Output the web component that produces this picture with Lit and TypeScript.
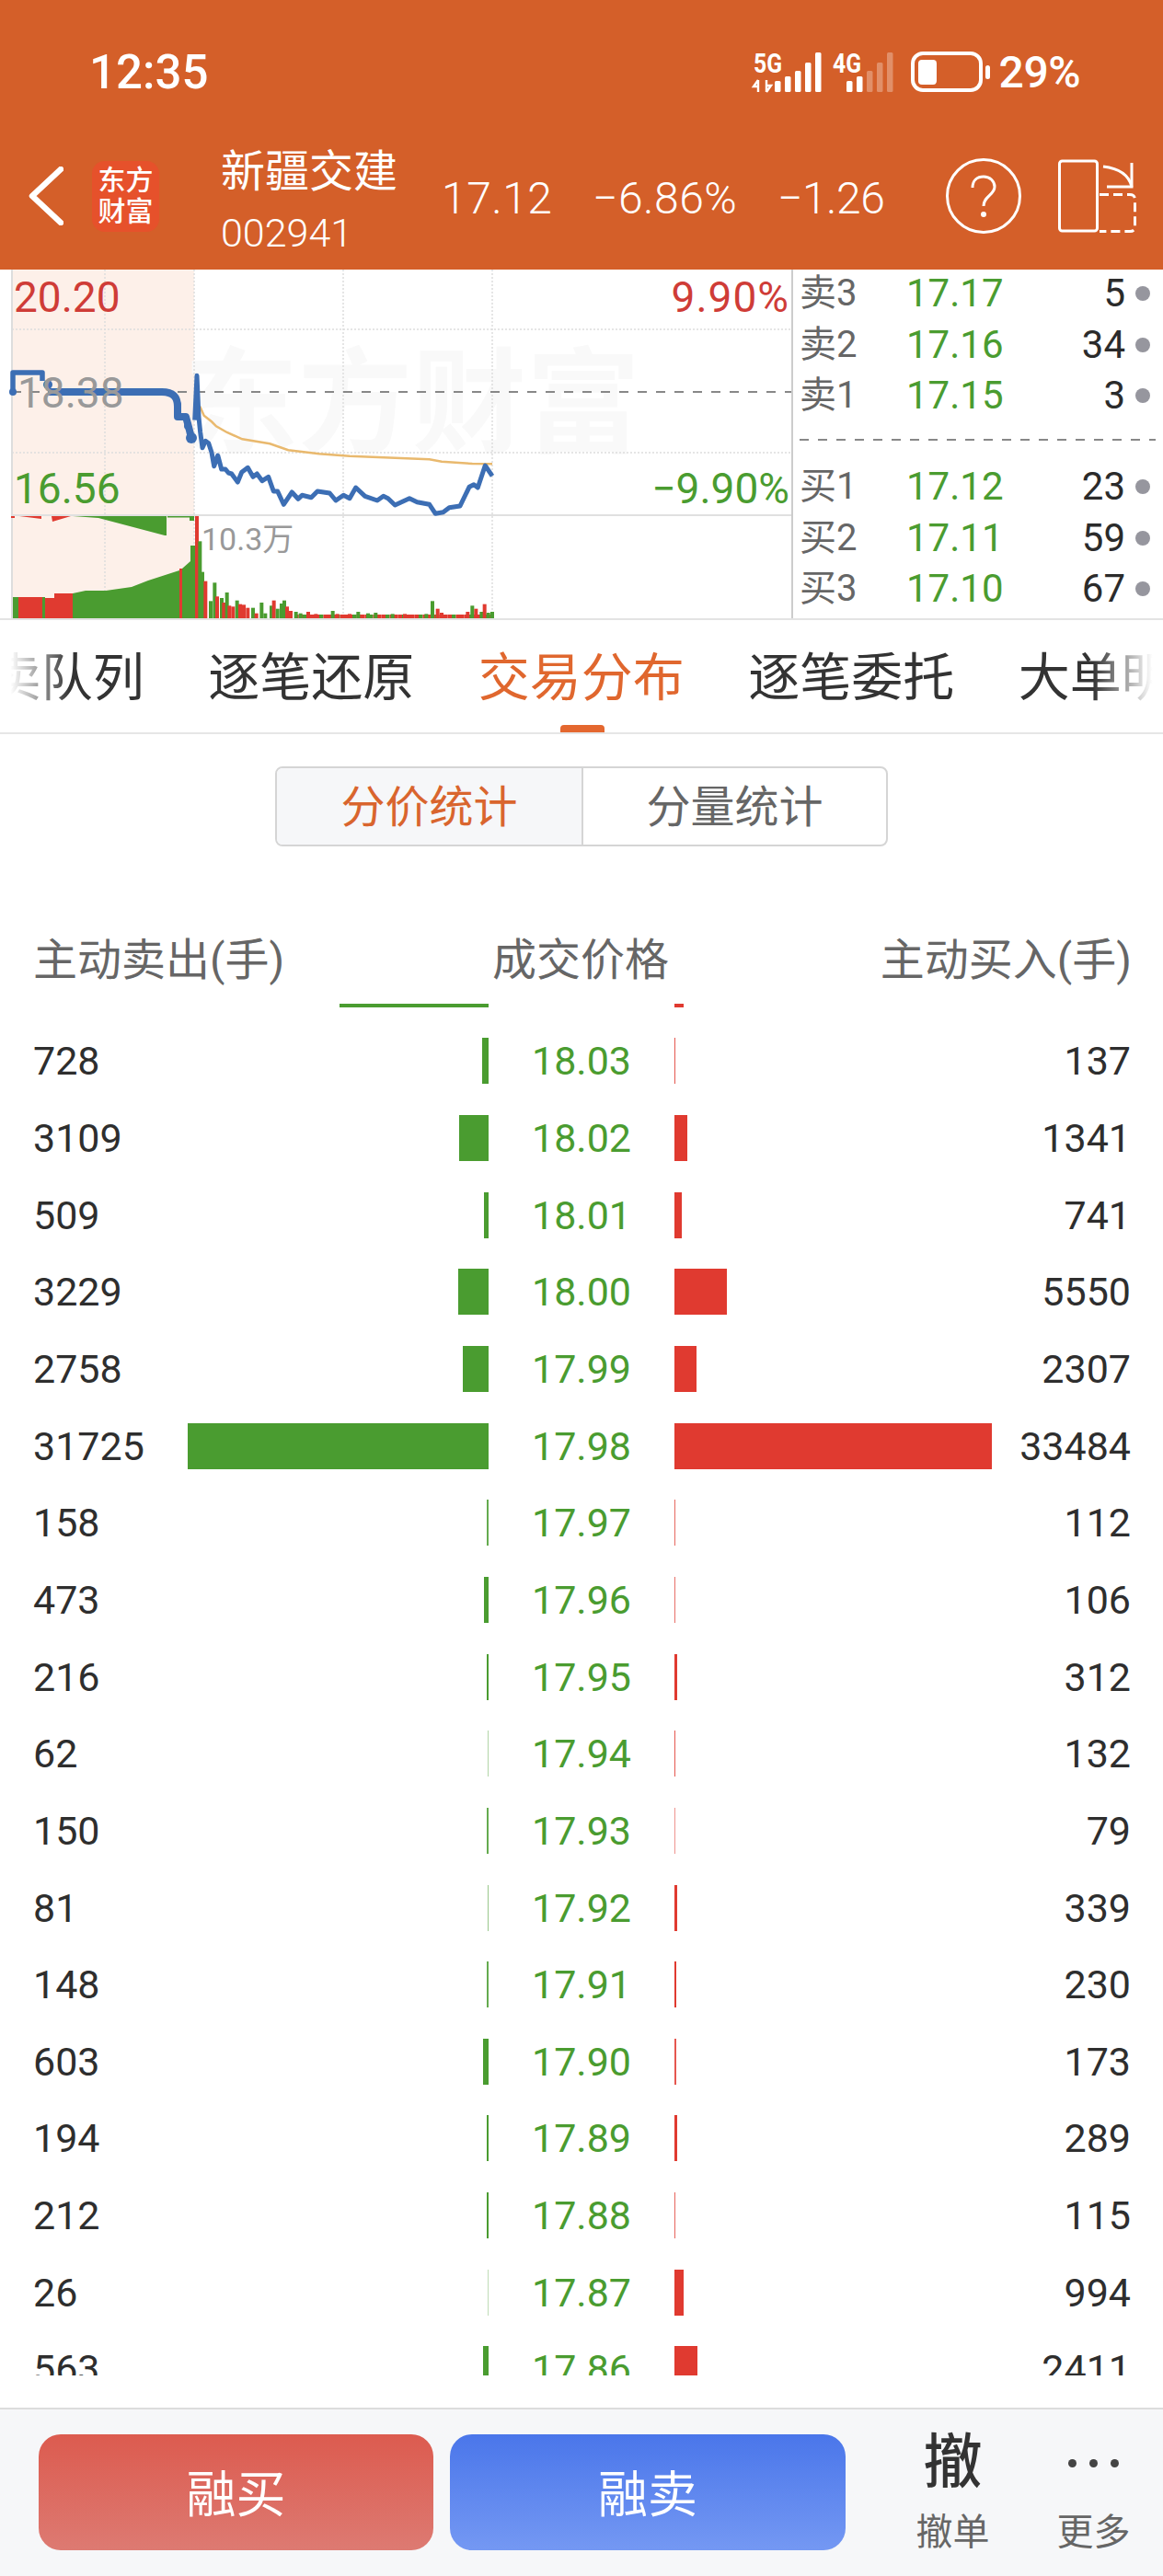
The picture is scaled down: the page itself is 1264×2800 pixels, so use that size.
import { LitElement, html, css, svg, unsafeCSS } from 'lit';
import { customElement } from 'lit/decorators.js';

// [卖出, 价格, 买入]
const TRADES: [number, string, number][] = [
  [728, '18.03', 137],
  [3109, '18.02', 1341],
  [509, '18.01', 741],
  [3229, '18.00', 5550],
  [2758, '17.99', 2307],
  [31725, '17.98', 33484],
  [158, '17.97', 112],
  [473, '17.96', 106],
  [216, '17.95', 312],
  [62, '17.94', 132],
  [150, '17.93', 79],
  [81, '17.92', 339],
  [148, '17.91', 230],
  [603, '17.90', 173],
  [194, '17.89', 289],
  [212, '17.88', 115],
  [26, '17.87', 994],
  [563, '17.86', 2411],
];

const ASKS = [
  ['卖3', '17.17', '5'],
  ['卖2', '17.16', '34'],
  ['卖1', '17.15', '3'],
];
const BIDS = [
  ['买1', '17.12', '23'],
  ['买2', '17.11', '59'],
  ['买3', '17.10', '67'],
];

const BAR_SCALE = 0.0103;

// intraday curves, in thirds of a pixel from the chart's (180, 380) corner
const PRICE = [
  [95, 230], [102, 85], [108, 220], [113, 270], [120, 320], [130, 298], [140, 305], [150, 335],
  [158, 380], [170, 345], [182, 390], [195, 390], [205, 402], [215, 405], [235, 432], [248, 400],
  [268, 385], [285, 415], [298, 405], [315, 428], [335, 415], [352, 462], [365, 462], [385, 505],
  [412, 465], [432, 487], [445, 475], [475, 482], [495, 462], [535, 468], [555, 492], [580, 475],
  [600, 485], [620, 450], [650, 478], [690, 492], [710, 478], [725, 485], [748, 507], [795, 485],
  [820, 497], [860, 505], [880, 535], [905, 530], [925, 515], [960, 510], [990, 448], [1005, 440],
  [1018, 450], [1042, 378], [1065, 412],
];
const AVERAGE = [
  [112, 185], [125, 215], [150, 235], [165, 250], [200, 270], [250, 292], [340, 307], [400, 328],
  [500, 340], [600, 347], [860, 358], [900, 365], [1000, 372], [1065, 373],
];
const VOLUME: [number, number, 'r' | 'g'][] = [
  [112, 625, 'g'], [120, 725, 'g'], [130, 755, 'r'], [147, 820, 'g'], [160, 760, 'g'], [168, 805, 'r'],
  [183, 810, 'g'], [190, 825, 'r'], [200, 792, 'g'], [208, 835, 'r'], [220, 838, 'r'], [233, 818, 'g'],
  [243, 830, 'r'], [255, 832, 'r'], [268, 842, 'r'], [285, 842, 'g'], [296, 860, 'r'], [313, 825, 'g'],
  [325, 860, 'g'], [345, 835, 'g'], [353, 818, 'r'], [365, 845, 'g'], [378, 828, 'g'], [387, 818, 'g'],
  [396, 838, 'r'], [408, 852, 'r'], [425, 855, 'g'], [440, 860, 'g'], [465, 855, 'r'], [490, 862, 'r'],
  [545, 852, 'g'], [560, 862, 'r'], [600, 862, 'r'], [628, 855, 'g'], [660, 860, 'g'], [685, 858, 'g'],
  [740, 862, 'g'], [780, 862, 'r'], [850, 862, 'g'], [870, 820, 'g'], [887, 845, 'r'], [900, 858, 'r'],
  [960, 865, 'r'], [985, 855, 'r'], [1000, 835, 'g'], [1012, 845, 'r'], [1030, 855, 'g'], [1040, 830, 'r'],
  [1052, 858, 'g'], [1065, 855, 'g'],
];

const RED = '#e03a30';
const GREEN = '#4a9c30';

const toPath = (pts: number[][]) =>
  pts.map(([x, y]) => `${(180 + x / 3).toFixed(1)},${(380 + y / 3).toFixed(1)}`).join(' ');

function signal(label: string, x0: number, lit: number, arrows: boolean) {
  const heights = [12, 17, 23, 32, 43];
  return html`<svg class="signal" width="72" height="46" viewBox="0 0 72 46">
    <text x="0" y="23" class="net" textLength="31" lengthAdjust="spacingAndGlyphs">${label}</text>
    ${arrows
      ? svg`<path d="M5 31v13M5 31l-5 7h5M14 44v-13M14 44l5-7h-5" fill="none" stroke="#fff" stroke-width="2.4"/>`
      : ''}
    ${heights.map(
      (h, i) => svg`<rect x="${x0 + i * 11}" y="${44 - h}" width="6.5" height="${h}" rx="1.5"
        fill="#fff" opacity="${i < lit ? 1 : 0.3}"/>`,
    )}
  </svg>`;
}

@customElement('app-root')
export class AppRoot extends LitElement {
  static styles = css`
    :host {
      display: block;
      width: 1264px;
      height: 2800px;
      background: #fff;
      overflow: hidden;
      font-family: Roboto, 'Noto Sans CJK SC', sans-serif;
    }
    .header {
      height: 293px;
      background: #d45f29;
      color: #fff;
    }
    .status {
      height: 156px;
      display: flex;
      align-items: flex-start;
      padding: 56px 90px 0 97px;
      box-sizing: border-box;
    }
    .time {
      font-size: 51px;
      font-weight: 500;
      line-height: 46px;
      margin-right: auto;
    }
    .signal {
      display: block;
      overflow: visible;
    }
    .signal + .signal {
      margin-left: 14px;
    }
    .net {
      font-size: 30px;
      font-weight: 700;
      fill: #fff;
    }
    .battery {
      display: block;
      margin: 0 9px 0 13px;
    }
    .pct {
      font-size: 48px;
      font-weight: 500;
      line-height: 46px;
      letter-spacing: -0.5px;
    }
    .nav {
      height: 114px;
      display: flex;
      align-items: center;
      padding-left: 31px;
    }
    .logo {
      width: 73px;
      height: 77px;
      margin: 0 67px 0 31px;
      border-radius: 14px;
      background: #e6512b;
      font-size: 30px;
      font-weight: 500;
      line-height: 34px;
      text-align: center;
      display: flex;
      flex-direction: column;
      justify-content: center;
    }
    .title {
      width: 240px;
      padding-top: 10px;
    }
    .name {
      font-size: 48px;
      line-height: 58px;
    }
    .code {
      font-size: 43px;
      font-weight: 300;
      line-height: 50px;
      margin-top: 12px;
    }
    .quote {
      display: grid;
      grid-template-columns: 164px 201px 183px;
      font-size: 48px;
      font-weight: 300;
      letter-spacing: 0.5px;
      padding-top: 4px;
    }
    .quote span:last-child {
      letter-spacing: -0.5px;
    }
    .help {
      width: 122px;
      display: block;
    }
    .market {
      height: 381px;
      display: flex;
      box-sizing: border-box;
      border-bottom: 2px solid #e3e3e3;
    }
    .chart {
      width: 860px;
      display: block;
      flex: none;
    }
    .chart text {
      font-family: Roboto, 'Noto Sans CJK SC', sans-serif;
      font-size: 46px;
    }
    .chart .pct-up {
      letter-spacing: 1px;
    }
    .chart .mark {
      font-size: 124px;
      font-weight: 700;
      fill: #f9f9f9;
      font-family: 'Noto Sans CJK SC', sans-serif;
    }
    .chart .peak {
      font-size: 34px;
      fill: #999;
    }
    .book {
      flex: 1;
      border-left: 2px solid #ccc;
      padding-left: 7px;
    }
    .quotes {
      display: flex;
      flex-direction: column;
      gap: 7.7px;
      padding-top: 1px;
    }
    .level {
      height: 48px;
      display: grid;
      grid-template-columns: 116px 104px 134px 34px;
      align-items: center;
      font-size: 42px;
      line-height: 50px;
    }
    .level .lbl {
      color: #666;
      font-size: 40px;
    }
    .level .px {
      color: ${unsafeCSS(GREEN)};
      white-space: nowrap;
    }
    .level .qty {
      color: #2b2b2b;
      text-align: right;
    }
    .level i {
      justify-self: end;
      width: 16px;
      height: 16px;
      margin-right: 7px;
      border-radius: 50%;
      background: #96969e;
    }
    .dash {
      height: 2px;
      margin: 23.6px 8px 24px 0;
      background: repeating-linear-gradient(90deg, #888 0 10px, transparent 10px 20px);
    }
    .tabs {
      position: relative;
      height: 124px;
      box-sizing: border-box;
      border-bottom: 2px solid #e6e6e6;
      overflow: hidden;
    }
    .tab-row {
      display: grid;
      grid-template-columns: repeat(5, 293.5px);
      margin-left: -102px;
      text-align: center;
      font-size: 56px;
      line-height: 80px;
      padding-top: 23px;
      color: #333;
      white-space: nowrap;
    }
    .tab-row .on {
      color: #e0672e;
    }
    .tab-mark {
      position: absolute;
      left: 609px;
      bottom: 0;
      width: 48px;
      height: 8px;
      border-radius: 4px 4px 0 0;
      background: #e4672f;
    }
    .fade {
      position: absolute;
      top: 0;
      bottom: 2px;
      width: 76px;
    }
    .fade.l {
      left: 0;
      background: linear-gradient(90deg, #fff 15%, rgba(255, 255, 255, 0));
    }
    .fade.r {
      right: 0;
      background: linear-gradient(270deg, #fff 15%, rgba(255, 255, 255, 0));
    }
    .segments {
      width: 666px;
      height: 87px;
      margin: 35px 0 0 299px;
      box-sizing: border-box;
      display: flex;
      border: 2px solid #d5d5d5;
      border-radius: 8px;
      font-size: 48px;
      line-height: 86px;
      text-align: center;
      color: #666;
    }
    .segments div {
      flex: 1;
    }
    .segments .on {
      flex: none;
      width: 331px;
      background: #f6f7f9;
      color: #d9652e;
      border-right: 2px solid #d5d5d5;
      border-radius: 6px 0 0 6px;
    }
    .heads {
      margin-top: 93px;
      height: 60px;
      padding: 0 34px 0 36px;
      display: flex;
      justify-content: space-between;
      font-size: 48px;
      line-height: 62px;
      color: #666;
    }
    .heads span:nth-child(2) {
      position: relative;
      left: -2px;
    }
    .trades {
      margin-top: 18px;
      height: 1491px;
      overflow: hidden;
    }
    .rows {
      margin-top: -63px;
    }
    .row {
      height: 83.65px;
      display: flex;
      align-items: center;
      font-size: 43px;
    }
    .sell,
    .buy {
      display: flex;
      align-items: center;
      justify-content: space-between;
      color: #2e2e2e;
    }
    .sell {
      width: 531px;
      padding-left: 36px;
      box-sizing: border-box;
    }
    .buy {
      width: 531px;
      padding-right: 35px;
      box-sizing: border-box;
    }
    .price {
      width: 202px;
      text-align: center;
      color: ${unsafeCSS(GREEN)};
    }
    .bar {
      height: 50px;
    }
    .bar.down {
      background: ${unsafeCSS(GREEN)};
    }
    .bar.up {
      background: ${unsafeCSS(RED)};
    }
    .footer {
      margin-top: 35px;
      height: 183px;
      box-sizing: border-box;
      border-top: 2px solid #dcdcdc;
      background: #f6f7f9;
      padding: 27px 0 0 42px;
      display: flex;
      align-items: flex-start;
    }
    .btn {
      width: 429px;
      height: 126px;
      border-radius: 24px;
      color: #fff;
      font-size: 54px;
      line-height: 134px;
      text-align: center;
    }
    .btn.buying {
      background: linear-gradient(#dc5b4f, #dd7a72);
    }
    .btn.selling {
      width: 430px;
      margin-left: 18px;
      background: linear-gradient(#4a76ea, #7498f3);
    }
    .tool {
      width: 81px;
      text-align: center;
      color: #666;
      font-size: 40px;
      line-height: 46px;
    }
    .tool.undo {
      margin-left: 76px;
    }
    .tool.more {
      margin-left: 72px;
    }
    .tool .top {
      display: flex;
      height: 62px;
      align-items: center;
      justify-content: center;
      color: #333;
      font-size: 64px;
      font-weight: 500;
      margin-bottom: 22px;
    }
    .dots {
      display: flex;
      gap: 14px;
    }
    .dots b {
      width: 9px;
      height: 9px;
      border-radius: 50%;
      background: #444;
    }
  `;

  // hairline bars can't go under a pixel, so they thin out through opacity instead
  private bar(value: number, side: 'down' | 'up') {
    const w = value * BAR_SCALE;
    const opacity = w < 1.8 ? Math.min(0.85, Math.max(0.35, w / 1.5)) : 1;
    return html`<div class="bar ${side}" style="width:${Math.max(1, Math.round(w))}px;opacity:${opacity}"></div>`;
  }

  private renderChart() {
    return html`<svg class="chart" width="860" height="379" viewBox="0 293 860 379">
      <rect x="13" y="293" width="198" height="379" fill="#fdf0e9" />
      <text class="mark" x="200" y="482">东方财富</text>
      <g stroke="#ddd" stroke-width="1.5" stroke-dasharray="2 2" fill="none">
        <path d="M114 293V672M211 293V672M373 293V672M535 293V672" />
        <path d="M13 358H860M13 492H860" />
      </g>
      <path d="M13 293V672" stroke="#ddd" stroke-width="2" />
      <path d="M13 426H860" stroke="#888" stroke-width="2" stroke-dasharray="10 10" />
      <path d="M13 560H860" stroke="#e0e0e0" stroke-width="2" />

      <polyline points="${toPath(AVERAGE)}" fill="none" stroke="#e9b96e" stroke-width="2.5" />
      <g fill="none" stroke="#3c6eb4" stroke-linejoin="round">
        <path d="M14 426V405H46V414" stroke-width="5.5" />
        <path d="M52 426H176C190 426 193 434 193 442V453H202L205 464L208 476" stroke-width="8" />
        <polyline points="${toPath(PRICE)}" stroke-width="5" />
      </g>
      <g fill="#3c6eb4">
        <circle cx="14" cy="426" r="4" />
        <circle cx="52" cy="418" r="5" />
        <circle cx="193" cy="440" r="4" />
        <circle cx="195" cy="453" r="4" />
        <circle cx="204" cy="463" r="4" />
        <circle cx="208" cy="476" r="6" />
      </g>

      <g fill="${RED}">
        <rect x="12" y="561" width="4" height="2" />
        <path d="M21 561L45 564V561ZM56 561L57 567L77 561Z" />
        <path d="M20 649H46V672H20ZM49 650H59V672H49ZM59 645H79V672H59Z" />
        <rect x="195" y="618" width="3" height="54" />
        <rect x="212" y="561" width="4" height="111" />
      </g>
      <g fill="${GREEN}">
        <path d="M79 561L107 563L179 582L181 582V561ZM206 561H211V566H206Z" />
        <rect x="182" y="561" width="24" height="1.5" />
        <path d="M14 649H20V672H14ZM46 649H49V672H46Z" />
        <path d="M79 645L93 642L115 642L143 638L161 631L195 620V672H79Z" />
        <path d="M198 618L207 610L207 593L212 593V672H198Z" />
      </g>
      ${Array.from({ length: 48 }, (_, i) => {
        const x = 320 + i * 4.5;
        return svg`<rect x="${x}" y="668" width="4.5" height="4" fill="${i % 4 === 2 ? GREEN : RED}" />`;
      })}
      ${VOLUME.map(
        ([x, top, c]) => svg`<rect x="${180 + x / 3 - 2}" y="${380 + top / 3}" width="4"
          height="${672 - (380 + top / 3)}" fill="${c === 'r' ? RED : GREEN}" />`,
      )}

      <text x="15" y="339" fill="#cf3c37">20.20</text>
      <text x="19" y="443" fill="#999">18.38</text>
      <text x="15" y="547" fill="${GREEN}">16.56</text>
      <text class="pct-up" x="858" y="339" fill="#cf3c37" text-anchor="end">9.90%</text>
      <text x="858" y="547" fill="${GREEN}" text-anchor="end">−9.90%</text>
      <text class="peak" x="219" y="598">10.3万</text>
    </svg>`;
  }

  private renderLevels(rows: string[][]) {
    return html`<div class="quotes">
      ${rows.map(
        ([lbl, px, qty]) => html`<div class="level">
          <span class="lbl">${lbl}</span><span class="px">${px}</span><span class="qty">${qty}</span><i></i>
        </div>`,
      )}
    </div>`;
  }

  render() {
    return html`
      <div class="header">
        <div class="status">
          <div class="time">12:35</div>
          ${signal('5G', 23, 5, true)} ${signal('4G', 15, 2, false)}
          <svg class="battery" width="87" height="44" viewBox="0 0 87 44">
            <rect x="2" y="2" width="74" height="40" rx="11" fill="none" stroke="#fff" stroke-width="4" />
            <rect x="8" y="9" width="20" height="27" rx="4" fill="#fff" />
            <rect x="81" y="15" width="5" height="15" rx="2.5" fill="#fff" />
          </svg>
          <div class="pct">29%</div>
        </div>
        <div class="nav">
          <svg width="38" height="64" viewBox="0 0 38 64">
            <path d="M35 3L4 32L35 61" fill="none" stroke="#fff" stroke-width="6.5" stroke-linecap="round" stroke-linejoin="round" />
          </svg>
          <div class="logo"><span>东方</span><span>财富</span></div>
          <div class="title">
            <div class="name">新疆交建</div>
            <div class="code">002941</div>
          </div>
          <div class="quote">
            <span>17.12</span>
            <span>−6.86%</span>
            <span>−1.26</span>
          </div>
          <svg class="help" height="82" viewBox="0 0 122 82">
            <circle cx="41" cy="41" r="39.5" fill="none" stroke="#fff" stroke-width="3" />
            <path d="M29 32c0-8 5-12 12-12s12 5 12 11c0 9-12 10-12 21" fill="none" stroke="#fff" stroke-width="3" />
            <circle cx="41" cy="61" r="3" fill="#fff" />
          </svg>
          <svg width="86" height="80" viewBox="0 0 86 80">
            <rect x="1.5" y="2" width="41" height="76" rx="3" fill="none" stroke="#fff" stroke-width="3" />
            <path d="M49 8C66 10 77 17 80 30" fill="none" stroke="#fff" stroke-width="3" />
            <path d="M80 4V30H53" fill="none" stroke="#fff" stroke-width="3" />
            <path d="M45 38.5H78Q83.5 38.5 83.5 44V73Q83.5 78.5 78 78.5H45" fill="none" stroke="#fff" stroke-width="3" stroke-dasharray="10 5" />
          </svg>
        </div>
      </div>

      <div class="market">
        ${this.renderChart()}
        <div class="book">
          ${this.renderLevels(ASKS)}
          <div class="dash"></div>
          ${this.renderLevels(BIDS)}
        </div>
      </div>

      <div class="tabs">
        <div class="tab-row">
          <span>买卖队列</span>
          <span>逐笔还原</span>
          <span class="on">交易分布</span>
          <span>逐笔委托</span>
          <span>大单明细</span>
        </div>
        <div class="tab-mark"></div>
        <div class="fade l"></div>
        <div class="fade r"></div>
      </div>

      <div class="segments">
        <div class="on">分价统计</div>
        <div>分量统计</div>
      </div>

      <div class="heads">
        <span>主动卖出(手)</span>
        <span>成交价格</span>
        <span>主动买入(手)</span>
      </div>

      <div class="trades">
        <div class="rows">
          <div class="row">
            <div class="sell"><span></span>${this.bar(15700, 'down')}</div>
            <div class="price"></div>
            <div class="buy">${this.bar(1000, 'up')}<span></span></div>
          </div>
          ${TRADES.map(
            ([sell, price, buy]) => html`<div class="row">
              <div class="sell"><span>${sell}</span>${this.bar(sell, 'down')}</div>
              <div class="price">${price}</div>
              <div class="buy">${this.bar(buy, 'up')}<span>${buy}</span></div>
            </div>`,
          )}
        </div>
      </div>

      <div class="footer">
        <div class="btn buying">融买</div>
        <div class="btn selling">融卖</div>
        <div class="tool undo">
          <div class="top">撤</div>
          撤单
        </div>
        <div class="tool more">
          <div class="top"><div class="dots"><b></b><b></b><b></b></div></div>
          更多
        </div>
      </div>
    `;
  }
}
